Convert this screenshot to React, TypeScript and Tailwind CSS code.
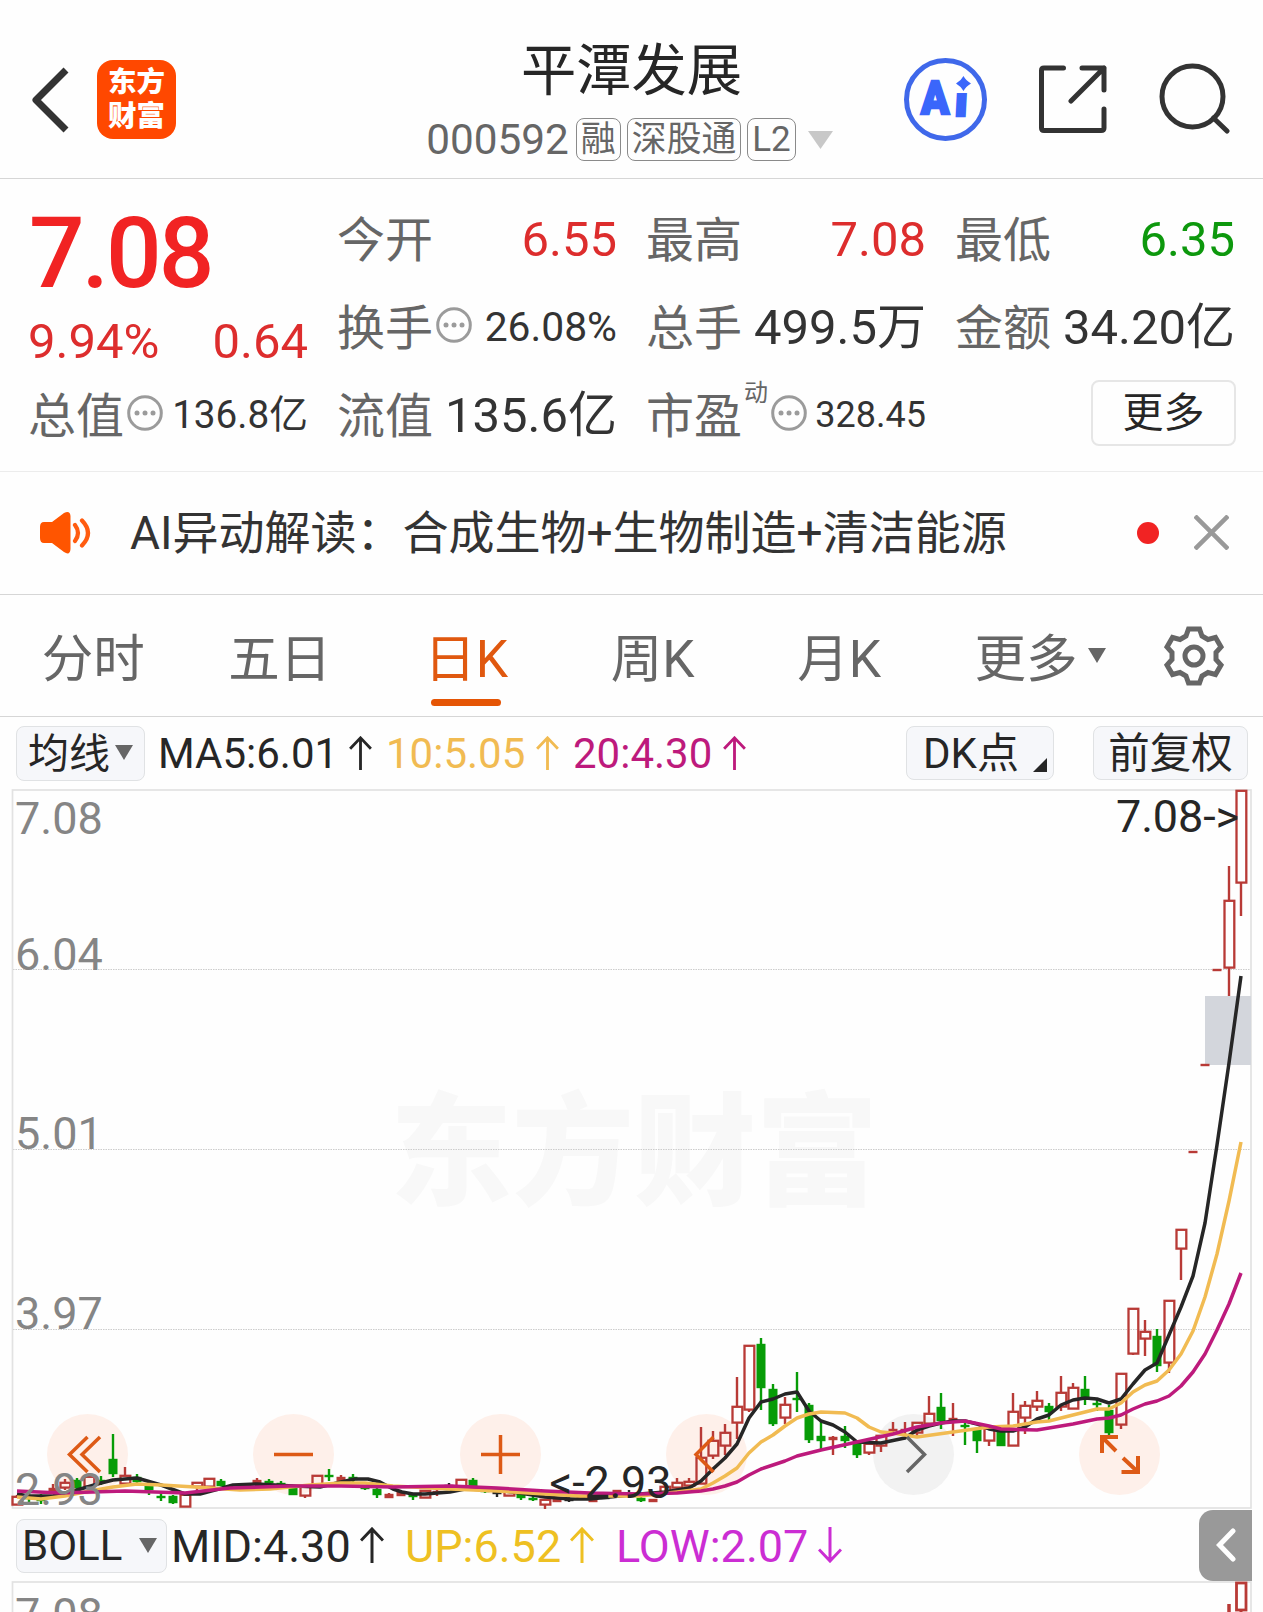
import React from 'react';

type Candle = {
  x: number;
  high: number;
  top: number;
  bottom: number;
  low: number;
  kind: 'up' | 'down' | 'flat';
};

const RED = '#b83a36';
const GREEN = '#079c07';
const INK = '#262626';
const YELLOW = '#f1bb52';
const MAGENTA = '#bd1a7c';

// [high, body top, body bottom, low, kind], newest bar first, one bar every 12px
const bars: [number, number, number, number, string][] = [
  [790, 790, 883, 916, 'u'],
  [866, 900, 968, 996, 'u'],
  [970, 969, 971, 970, 'u'],
  [1065, 1064, 1066, 1065, 'u'],
  [1152, 1151, 1153, 1152, 'u'],
  [1229, 1229, 1249, 1280, 'u'],
  [1300, 1300, 1363, 1373, 'u'],
  [1329, 1336, 1366, 1372, 'd'],
  [1320, 1331, 1339, 1356, 'u'],
  [1308, 1308, 1354, 1355, 'u'],
  [1373, 1373, 1425, 1429, 'u'],
  [1405, 1410, 1433, 1435, 'd'],
  [1400, 1403, 1405, 1411, 'd'],
  [1376, 1389, 1399, 1405, 'd'],
  [1383, 1387, 1409, 1409, 'u'],
  [1376, 1392, 1407, 1411, 'u'],
  [1403, 1406, 1412, 1420, 'd'],
  [1391, 1400, 1407, 1411, 'u'],
  [1401, 1405, 1418, 1434, 'u'],
  [1393, 1411, 1446, 1446, 'u'],
  [1430, 1430, 1446, 1446, 'd'],
  [1428, 1428, 1441, 1446, 'u'],
  [1429, 1429, 1441, 1453, 'd'],
  [1423, 1425, 1427, 1445, 'd'],
  [1403, 1418, 1420, 1436, 'u'],
  [1393, 1407, 1421, 1429, 'd'],
  [1396, 1413, 1424, 1425, 'u'],
  [1422, 1422, 1433, 1436, 'u'],
  [1422, 1429, 1431, 1434, 'u'],
  [1422, 1429, 1431, 1434, 'u'],
  [1435, 1435, 1446, 1452, 'u'],
  [1442, 1443, 1453, 1455, 'u'],
  [1442, 1442, 1455, 1458, 'd'],
  [1426, 1436, 1441, 1448, 'd'],
  [1436, 1437, 1440, 1455, 'u'],
  [1422, 1436, 1441, 1449, 'd'],
  [1403, 1405, 1440, 1443, 'd'],
  [1372, 1398, 1400, 1412, 'd'],
  [1397, 1404, 1418, 1424, 'u'],
  [1384, 1389, 1424, 1426, 'd'],
  [1338, 1344, 1388, 1410, 'd'],
  [1345, 1345, 1410, 1412, 'u'],
  [1377, 1406, 1423, 1439, 'u'],
  [1424, 1432, 1446, 1455, 'u'],
  [1431, 1440, 1456, 1459, 'u'],
  [1427, 1457, 1484, 1484, 'u'],
  [1478, 1481, 1486, 1488, 'u'],
  [1478, 1482, 1488, 1490, 'u'],
  [1486, 1486, 1493, 1493, 'u'],
  [1500, 1499, 1502, 1501, 'u'],
  [1497, 1498, 1501, 1502, 'd'],
  [1490, 1493, 1495, 1495, 'f'],
  [1490, 1490, 1493, 1493, 'u'],
  [1496, 1497, 1499, 1499, 'f'],
  [1499, 1499, 1502, 1501, 'u'],
  [1497, 1497, 1499, 1500, 'u'],
  [1496, 1499, 1501, 1502, 'f'],
  [1499, 1499, 1502, 1501, 'u'],
  [1499, 1499, 1505, 1509, 'u'],
  [1496, 1498, 1500, 1501, 'd'],
  [1493, 1494, 1498, 1500, 'd'],
  [1492, 1491, 1496, 1494, 'u'],
  [1490, 1492, 1494, 1497, 'f'],
  [1489, 1490, 1492, 1493, 'd'],
  [1478, 1480, 1486, 1486, 'd'],
  [1479, 1479, 1489, 1490, 'u'],
  [1483, 1485, 1487, 1488, 'f'],
  [1490, 1491, 1493, 1496, 'u'],
  [1490, 1490, 1498, 1498, 'u'],
  [1494, 1495, 1497, 1500, 'd'],
  [1491, 1492, 1496, 1496, 'u'],
  [1493, 1494, 1498, 1498, 'u'],
  [1488, 1489, 1495, 1498, 'd'],
  [1486, 1487, 1489, 1490, 'd'],
  [1474, 1477, 1480, 1482, 'd'],
  [1475, 1477, 1481, 1482, 'u'],
  [1469, 1475, 1477, 1481, 'd'],
  [1475, 1475, 1485, 1485, 'u'],
  [1486, 1486, 1496, 1498, 'u'],
  [1487, 1487, 1495, 1495, 'd'],
  [1481, 1483, 1485, 1486, 'd'],
  [1479, 1481, 1483, 1485, 'd'],
  [1478, 1480, 1484, 1486, 'u'],
  [1484, 1486, 1488, 1489, 'f'],
  [1487, 1488, 1490, 1491, 'd'],
  [1479, 1481, 1486, 1486, 'd'],
  [1478, 1478, 1487, 1487, 'u'],
  [1482, 1482, 1487, 1495, 'u'],
  [1494, 1494, 1507, 1507, 'u'],
  [1495, 1496, 1503, 1504, 'd'],
  [1493, 1496, 1498, 1501, 'd'],
  [1485, 1486, 1490, 1495, 'd'],
  [1474, 1477, 1482, 1484, 'd'],
  [1467, 1475, 1484, 1486, 'u'],
  [1434, 1459, 1474, 1477, 'd'],
  [1476, 1480, 1483, 1485, 'd'],
  [1476, 1476, 1487, 1488, 'u'],
  [1478, 1480, 1488, 1489, 'd'],
  [1479, 1482, 1488, 1490, 'u'],
  [1484, 1488, 1492, 1493, 'u'],
  [1494, 1499, 1501, 1504, 'd'],
  [1493, 1497, 1499, 1502, 'd'],
  [1495, 1496, 1505, 1505, 'u'],
];

const candles: Candle[] = bars.map(([high, top, bottom, low, k], i) => ({
  x: 1241 - i * 12,
  high,
  top,
  bottom,
  low,
  kind: k === 'u' ? 'up' : k === 'd' ? 'down' : 'flat',
}));

const ma5 =
  '17,1494 29,1496 53,1496 77,1490 101,1483 113,1480 137,1478 161,1485 185,1494 200,1494 215,1490 233,1485 257,1484 293,1486 320,1487 341,1482 355,1479 368,1479 380,1482 393,1489 402,1492 413,1494 425,1494 450,1492 465,1489 497,1490 520,1493 545,1497 570,1499 590,1499 610,1497 640,1494 665,1492 689,1488 701,1481 713,1469 725,1458 737,1444 749,1418 761,1402 773,1399 785,1394 797,1392 809,1411 821,1421 833,1425 845,1432 857,1442 881,1443 905,1438 917,1430 929,1426 941,1423 953,1421 965,1421 977,1424 989,1429 1001,1431 1013,1431 1025,1427 1037,1419 1049,1415 1061,1405 1073,1400 1085,1398 1097,1399 1109,1403 1121,1399 1133,1384 1145,1370 1157,1363 1169,1335 1181,1307 1193,1276 1205,1223 1217,1145 1229,1063 1241,976';
const ma10 =
  '17,1497 41,1499 65,1496 90,1491 113,1487 137,1484 161,1485 195,1487 240,1490 270,1489 310,1485 341,1483 365,1483 393,1486 450,1489 497,1491 545,1494 580,1496 640,1496 677,1492 701,1489 713,1483 725,1476 737,1468 749,1453 761,1442 773,1435 785,1426 797,1418 809,1414 821,1412 845,1413 857,1418 869,1427 881,1432 893,1433 917,1437 953,1432 989,1427 1013,1426 1037,1422 1049,1421 1073,1415 1097,1409 1109,1409 1121,1403 1133,1392 1145,1385 1157,1381 1169,1370 1181,1354 1193,1331 1205,1297 1217,1254 1229,1201 1241,1142';
const ma20 =
  '17,1491 60,1493 125,1491 185,1493 230,1488 290,1486 341,1486 393,1487 450,1486 497,1488 545,1491 590,1493 640,1494 677,1493 701,1491 713,1489 725,1486 737,1482 749,1475 761,1469 773,1465 785,1461 797,1456 821,1450 857,1442 893,1434 917,1427 941,1423 965,1421 989,1426 1001,1429 1037,1430 1073,1424 1097,1419 1109,1418 1121,1415 1133,1409 1145,1404 1157,1401 1169,1396 1181,1386 1193,1372 1205,1354 1217,1330 1229,1304 1241,1273';

const CandleBar: React.FC<{ c: Candle }> = ({ c }) => {
  const color = c.kind === 'up' ? RED : c.kind === 'down' ? GREEN : INK;
  const hollow = c.kind === 'up' && c.bottom - c.top > 4;
  return (
    <g>
      {c.high < c.top && <line x1={c.x} x2={c.x} y1={c.high} y2={c.top} stroke={color} strokeWidth="2.4" />}
      {c.low > c.bottom && <line x1={c.x} x2={c.x} y1={c.bottom} y2={c.low} stroke={color} strokeWidth="2.4" />}
      {hollow ? (
        <rect x={c.x - 4.5} y={c.top + 0.8} width="9.8" height={c.bottom - c.top - 1.2} fill="none" stroke={color} strokeWidth="2.3" />
      ) : (
        <rect x={c.x - 4.5} y={c.top - 0.2} width="9" height={c.bottom - c.top + 0.4} fill={color} />
      )}
    </g>
  );
};

const CandleChart: React.FC = () => (
  <svg className="block h-[720px] w-[1263px]" viewBox="0 789 1263 720">
    <text x="390" y="1195" fontSize="122" fontWeight="900" fill="#f8f8f8" fontFamily="Noto Sans CJK SC, sans-serif">
      东方财富
    </text>
    {[969.5, 1149.5, 1329.5].map((y) => (
      <line key={y} x1="13" x2="1250" y1={y} y2={y} stroke="#cccccc" strokeWidth="1" strokeDasharray="1.5 1" />
    ))}
    <rect x="12.5" y="790" width="1238.5" height="718" fill="none" stroke="#e2e2e2" strokeWidth="1.7" />
    <rect x="1205" y="996" width="46" height="69" fill="#d3d6dc" />
    <g fill="#ff5a14" fillOpacity="0.085">
      {[87.5, 293.5, 500.5, 706.5, 1119.5].map((x) => (
        <circle key={x} cx={x} cy="1454.5" r="40.5" />
      ))}
    </g>
    <circle cx="913.5" cy="1454.5" r="40.5" fill="#f2f2f2" />
    {candles.map((c) => (
      <CandleBar key={c.x} c={c} />
    ))}
    <g fill="none" strokeWidth="3.5" strokeLinejoin="round">
      <polyline points={ma5} stroke={INK} />
      <polyline points={ma10} stroke={YELLOW} />
      <polyline points={ma20} stroke={MAGENTA} />
    </g>
    <g fontSize="45" fill="#858585">
      <text x="15" y="834">7.08</text>
      <text x="15" y="970">6.04</text>
      <text x="15" y="1149">5.01</text>
      <text x="15" y="1329">3.97</text>
      <text x="15" y="1505">2.93</text>
    </g>
    <g fontSize="45" fill={INK}>
      <text x="1116" y="832" textLength="123">7.08-&gt;</text>
      <text x="549.5" y="1498" textLength="122">&lt;-2.93</text>
    </g>
    <g fill="none" stroke="#dd5a16" strokeWidth="3.5">
      <path d="M87.5 1437L69.5 1454.5L87.5 1472M100 1437L82 1454.5L100 1472" />
      <path d="M274 1454.5H313" />
      <path d="M481 1454.5H520M500.5 1435V1474" />
      <path d="M713.5 1437L696 1454.5L713.5 1472" />
      <path d="M907 1437L924.5 1454.5L907 1472" stroke="#666666" />
      <path d="M1102 1453V1437H1118M1102 1437L1116 1451M1138 1456V1472H1121.5M1138 1472L1123 1458" strokeWidth="4" />
    </g>
  </svg>
);

const Arrow: React.FC<{ className?: string; down?: boolean }> = ({ className = '', down }) => (
  <svg className={`shrink-0 ${className}`} viewBox="0 0 24 36" fill="none" stroke="currentColor" strokeWidth="3">
    {down ? <path d="M12 0V34M1 22.5L12 34L23 22.5" /> : <path d="M12 36V2M1 13.5L12 2L23 13.5" />}
  </svg>
);

const Triangle: React.FC<{ className: string }> = ({ className }) => (
  <svg className={`shrink-0 ${className}`} viewBox="0 0 18 15" preserveAspectRatio="none">
    <path d="M0 0H18L9 15Z" fill="currentColor" />
  </svg>
);

const Dots: React.FC<{ className?: string }> = ({ className = '' }) => (
  <svg className={`h-9 w-9 shrink-0 ${className}`} viewBox="0 0 36 36">
    <circle cx="18" cy="18" r="16.3" fill="none" stroke="#9b9b9b" strokeWidth="3" />
    <circle cx="10" cy="18" r="2.5" fill="#9b9b9b" />
    <circle cx="18" cy="18" r="2.5" fill="#9b9b9b" />
    <circle cx="26" cy="18" r="2.5" fill="#9b9b9b" />
  </svg>
);

const Header: React.FC = () => (
  <header className="grid h-[179px] grid-cols-[426px_411px_426px] border-b border-[#d6d6d6]">
    <div className="flex items-start pt-[60px] pl-[30px]">
      <svg className="mt-[7px] h-[66px] w-10" viewBox="0 0 40 66" fill="none" stroke="#333333" strokeWidth="7" strokeLinejoin="round">
        <path d="M36 3L6 33L36 63" />
      </svg>
      <div className="ml-[27px] flex h-[79px] w-[79px] flex-col items-center justify-center rounded-2xl bg-[#ff4800] text-[28.5px] leading-[34px] font-black text-white">
        <span>东方</span>
        <span>财富</span>
      </div>
    </div>
    <div className="flex flex-col items-center pt-[40px]">
      <h1 className="text-[55.3px] leading-[64px] text-[#262626]">平潭发展</h1>
      <div className="mt-[10px] mr-[4px] flex items-center text-[#666666]">
        <span className="pt-px text-[42.3px] leading-[50px]">000592</span>
        <span className="ml-[7px] flex h-[43px] items-center rounded-lg border-[1.5px] border-[#8a8a8a] px-[4px] text-[35px] leading-none">融</span>
        <span className="ml-[6px] flex h-[43px] items-center rounded-lg border-[1.5px] border-[#8a8a8a] px-[4px] text-[34.8px] leading-none">深股通</span>
        <span className="ml-[6px] flex h-[43px] items-center rounded-lg border-[1.5px] border-[#8a8a8a] px-[4px] text-[35px] leading-none">L2</span>
        <Triangle className="ml-[12px] h-[18px] w-[25px] text-[#c8c8c8]" />
      </div>
    </div>
    <div className="flex items-start pt-[58px] pl-[67px]">
      <div className="relative h-[83px] w-[83px] rounded-full border-[5px] border-[#3f68ea] text-[#3a66fb] [-webkit-text-stroke:2.5px_#3a66fb]">
        <span className="absolute top-[11px] left-[12px] origin-left scale-x-88 text-[47px] leading-[48px] font-black">A</span>
        <span className="absolute top-[13px] left-[46px] -skew-x-3 text-[46px] leading-[48px] font-black [clip-path:inset(17px_-4px_0_-4px)]">i</span>
        <svg className="absolute top-[13px] left-[47px] h-[15px] w-[15px]" viewBox="0 0 14 14">
          <path d="M7 0Q9 4 14 7Q9 10 7 14Q5 10 0 7Q5 4 7 0Z" fill="currentColor" />
        </svg>
      </div>
      <svg className="mt-[7px] ml-[51px] h-[69px] w-[70px]" viewBox="1038 65 70 69" fill="none" stroke="#333333" strokeWidth="5" strokeLinecap="round" strokeLinejoin="round">
        <path d="M1063.5 68H1044Q1041.5 68 1041.5 70.5V128Q1041.5 130.5 1044 130.5H1101Q1104 130.5 1104 128V109M1082 68H1104V90M1104 68L1071 101" />
      </svg>
      <svg className="mt-[5px] ml-[51px] h-[71px] w-[72px]" viewBox="1159 63 72 71" fill="none" stroke="#333333" strokeWidth="5" strokeLinecap="round">
        <circle cx="1192.5" cy="96.5" r="30.5" />
        <path d="M1213.5 118L1227 131" />
      </svg>
    </div>
  </header>
);

const Stat: React.FC<{ label: string; value: string; valueClass?: string; dots?: boolean }> = ({
  label,
  value,
  valueClass = 'text-[49px] text-[#333333]',
  dots,
}) => (
  <div className="flex items-center justify-between whitespace-nowrap">
    <span className="-ml-px flex items-center text-[48px] text-[#666666]">
      <span className="pt-[3px]">{label}</span>
      {dots && <Dots className="-mt-1 ml-[3px]" />}
    </span>
    <span className={valueClass}>{value}</span>
  </div>
);

const Quote: React.FC = () => (
  <section className="grid h-[293px] grid-cols-4 grid-rows-[88px_88px_88px] gap-x-[30px] border-b border-[#ececec] pt-[16px] pr-[28px] pl-[29px] leading-none">
    <div className="row-span-2 flex flex-col">
      <span className="text-[98px] leading-[118px] font-medium tracking-[-3px] text-[#f12323]">7.08</span>
      <div className="flex justify-between text-[49px] leading-[58px] text-[#dd2d2d]">
        <span className="-ml-px">9.94%</span>
        <span>0.64</span>
      </div>
    </div>
    <Stat label="今开" value="6.55" valueClass="text-[49px] text-[#dd2d2d]" />
    <Stat label="最高" value="7.08" valueClass="text-[49px] text-[#dd2d2d]" />
    <Stat label="最低" value="6.35" valueClass="text-[49px] text-[#0d980d]" />
    <Stat label="换手" value="26.08%" valueClass="text-[40.8px] text-[#333333]" dots />
    <Stat label="总手" value="499.5万" />
    <Stat label="金额" value="34.20亿" />
    <Stat label="总值" value="136.8亿" valueClass="text-[38.7px] text-[#333333]" dots />
    <Stat label="流值" value="135.6亿" />
    <div className="-ml-px flex items-center text-[#666666]">
      <span className="pt-[3px] text-[48px]">市盈</span>
      <span className="mt-[10px] ml-[2px] self-start text-[24px]">动</span>
      <Dots className="-mt-1 ml-[3px]" />
      <span className="ml-auto text-[36px] text-[#333333]">328.45</span>
    </div>
    <div className="flex items-center justify-end">
      <button className="-mt-[5px] flex h-[66px] w-[145px] translate-x-px items-center justify-center rounded-lg border-2 border-[#e6e6e6] pt-px text-[41px] text-[#262626]">更多</button>
    </div>
  </section>
);

const Notice: React.FC = () => (
  <section className="flex h-[123px] items-center border-b border-[#d6d6d6] pr-[34px] pl-[39px]">
    <svg className="h-[42px] w-[53px] shrink-0" viewBox="39 511 53 42">
      <path d="M44 521H52L64 512Q70 509 70.5 515V548Q70 555 64 551L52 542H44Q40 542 40 537V526Q40 521 44 521Z" fill="#ff5500" />
      <path d="M75 524Q81 532 75 540M82 519.5Q94 532 82 544.5" fill="none" stroke="#ff5c10" strokeWidth="4.2" strokeLinecap="round" />
    </svg>
    <span className="ml-[38px] text-[46px] leading-[56px] whitespace-nowrap text-[#333333]">AI异动解读：合成生物+生物制造+清洁能源</span>
    <span className="ml-auto h-[22px] w-[22px] rounded-full bg-[#f12323]" />
    <svg className="-mt-0.5 ml-[35px] h-[35px] w-[35px]" viewBox="0 0 35 35" stroke="#999999" strokeWidth="4.5">
      <path d="M1 1L34 34M34 1L1 34" />
    </svg>
  </section>
);

const periods = ['分时', '五日', '日K', '周K', '月K'];

const Tabs: React.FC = () => (
  <nav className="flex h-[122px] border-b border-[#d6d6d6] text-[51.5px] leading-[60px] text-[#666666]">
    {periods.map((p) => (
      <div key={p} className={`flex w-[186.5px] flex-col items-center pt-[35px] ${p === '日K' ? 'text-[#e0580f]' : ''}`}>
        <span>{p}</span>
        {p === '日K' && <span className="mt-[9px] h-[7px] w-[70px] rounded-full bg-[#e55505]" />}
      </div>
    ))}
    <div className="flex items-start pt-[35px] pl-[42px]">
      <span>更多</span>
      <Triangle className="mt-[18px] ml-[10px] h-[15px] w-[18px]" />
    </div>
    <svg className="mt-[30px] ml-[57px] h-[62px] w-[62px]" viewBox="-31 -31 62 62" fill="none" stroke="#666666" strokeWidth="5">
      <path d="M-5.5 -27H5.5L8 -20L14 -16.5L21.5 -18.5L27 -9L22 -3.5V3.5L27 9L21.5 18.5L14 16.5L8 20L5.5 27H-5.5L-8 20L-14 16.5L-21.5 18.5L-27 9L-22 3.5V-3.5L-27 -9L-21.5 -18.5L-14 -16.5L-8 -20Z" />
      <circle r="9" />
    </svg>
  </nav>
);

const Indicators: React.FC = () => (
  <div className="flex h-[72px] items-center pr-[15px] pl-[16px] text-[42px] leading-none whitespace-nowrap text-[#262626]">
    <button className="flex h-[55px] w-[129px] items-center rounded-lg border-[1.5px] border-[#e0e2e4] bg-[#f6f7fa] pl-[11px]">
      <span className="pt-[2px] text-[41px]">均线</span>
      <Triangle className="-mt-0.5 ml-[5px] h-[15px] w-[18px] text-[#666666]" />
    </button>
    <span className="ml-[13px] w-[180px] pt-[2px]">MA5:6.01</span>
    <Arrow className="ml-[11px] h-[34px] w-[23px]" />
    <span className="ml-[14px] w-[140px] pt-[2px] text-[#f1bb52]">10:5.05</span>
    <Arrow className="ml-[10px] h-[34px] w-[23px] text-[#f1bb52]" />
    <span className="ml-[14px] w-[140px] pt-[2px] text-[#bd1a7c]">20:4.30</span>
    <Arrow className="ml-[10px] h-[34px] w-[23px] text-[#bd1a7c]" />
    <button className="ml-auto flex h-[54px] w-[148px] items-center rounded-lg border-[1.5px] border-[#e0e2e4] bg-[#f6f7fa] pl-[16px]">
      <span className="pt-px">DK点</span>
      <svg className="mt-[24px] ml-[14px] h-[14px] w-[14px]" viewBox="0 0 14 14">
        <path d="M14 0V14H0Z" fill="#262626" />
      </svg>
    </button>
    <button className="ml-[39px] flex h-[54px] w-[155px] items-center justify-center rounded-lg border-[1.5px] border-[#e0e2e4] bg-[#f6f7fa] pt-px text-[41.5px]">前复权</button>
  </div>
);

const Boll: React.FC = () => (
  <div className="flex h-[72px] items-center pr-[11px] pl-[16px] text-[45px] leading-none whitespace-nowrap text-[#262626]">
    <button className="mt-px flex h-[54px] w-[151px] items-center justify-between rounded-lg border-[1.5px] border-[#e0e2e4] bg-[#f6f7fa] pr-[9px] pl-[5px]">
      <span className="pt-px text-[42px]">BOLL</span>
      <Triangle className="h-[15px] w-[18px] text-[#666666]" />
    </button>
    <span className="ml-[4px] w-[180px] pt-[2px]">MID:4.30</span>
    <Arrow className="ml-[9px] h-[36px] w-6" />
    <span className="ml-[21px] w-[158px] pt-[2px] text-[#eec022]">UP:6.52</span>
    <Arrow className="ml-[7px] h-[36px] w-6 text-[#eec022]" />
    <span className="ml-[22px] w-[194px] pt-[2px] text-[#cb2dd3]">LOW:2.07</span>
    <Arrow className="ml-[8px] h-[36px] w-6 text-[#cb2dd3]" down />
    <button className="ml-auto flex h-[71px] w-[53px] items-center justify-center rounded-l-[14px] bg-[#999999]">
      <svg className="h-[34px] w-5" viewBox="0 0 20 34" fill="none" stroke="#ffffff" strokeWidth="5" strokeLinecap="round">
        <path d="M17 3L3.5 17L17 31" />
      </svg>
    </button>
  </div>
);

const SubChart: React.FC = () => (
  <svg className="block h-[31px] w-[1263px]" viewBox="0 1581 1263 31">
    <rect x="12.5" y="1582" width="1238.5" height="200" fill="none" stroke="#e2e2e2" strokeWidth="1.7" />
    <text x="15" y="1630" fontSize="45" fill="#858585">7.08</text>
    <rect x="1236.5" y="1583" width="9.5" height="27" fill="none" stroke={RED} strokeWidth="2.8" />
    <line x1="1241" x2="1241" y1="1610" y2="1612" stroke={RED} strokeWidth="3" />
    <line x1="1229" x2="1229" y1="1604" y2="1612" stroke={RED} strokeWidth="3.5" />
  </svg>
);

export default function App() {
  return (
    <div className="h-[1612px] w-[1263px] overflow-hidden bg-[#fefefe] font-['Roboto','Noto_Sans_CJK_SC',sans-serif]">
      <Header />
      <Quote />
      <Notice />
      <Tabs />
      <Indicators />
      <CandleChart />
      <Boll />
      <SubChart />
    </div>
  );
}
